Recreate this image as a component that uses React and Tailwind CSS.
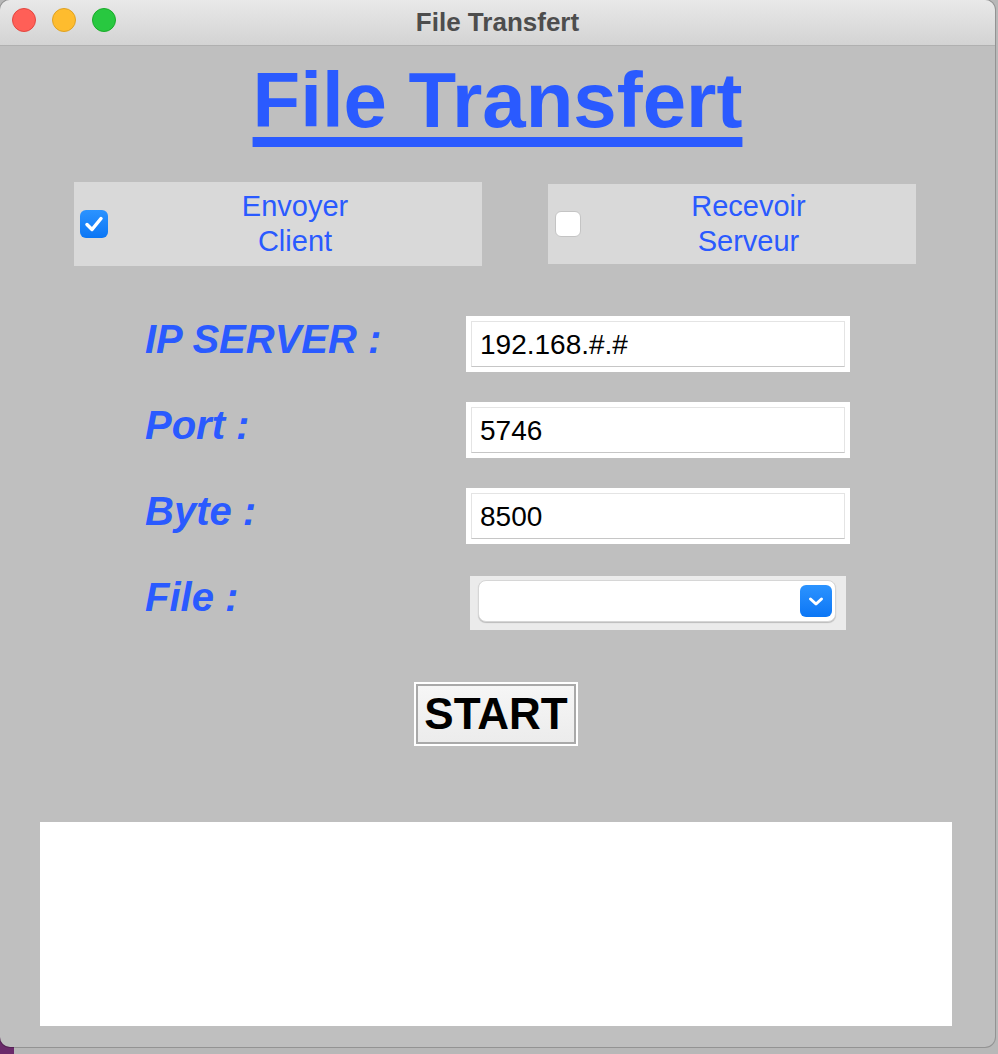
import React from 'react';

const blue = 'text-[#2a5aff]';

const Checkbox = ({ checked }) =>
  checked ? (
    <div className="w-[28px] h-[28px] rounded-[6px] bg-gradient-to-b from-[#2b93ff] to-[#0a76f5] flex items-center justify-center shrink-0">
      <svg width="24" height="24" viewBox="0 0 24 24">
        <path d="M5 12.5 L10 17.5 L19 6.5" fill="none" stroke="#fff" strokeWidth="3.5" strokeLinecap="round" strokeLinejoin="round" />
      </svg>
    </div>
  ) : (
    <div className="w-[26px] h-[26px] rounded-[6px] bg-white border border-[#c4c4c4] shrink-0" />
  );

const ModeBox = ({ checked, lines, className }) => (
  <div className={`bg-[#d9d9d9] flex items-center ${className}`}>
    <Checkbox checked={checked} />
    <div className={`flex-1 text-center text-[29px] leading-[35px] ${blue}`}>
      {lines.map((l) => (
        <div key={l}>{l}</div>
      ))}
    </div>
  </div>
);

const Field = ({ value }) => (
  <div className="bg-white p-[5px] w-[384px] h-[56px]">
    <div className="h-full border border-[#e4e4e4] border-b-[#c6c6c6] flex items-center pl-[8px] pt-[2px] text-[28px] text-black">
      {value}
    </div>
  </div>
);

const Row = ({ label, children }) => (
  <div className="flex items-start h-[56px]">
    <div className={`w-[321px] text-[40px] leading-[46px] font-bold italic ${blue}`}>{label}</div>
    {children}
  </div>
);

const App = () => {
  return (
    <div className="w-[998px] h-[1054px] bg-[#b8b8b8] relative overflow-hidden" style={{ fontFamily: '"Liberation Sans", Arial, sans-serif' }}>
      <div className="absolute left-0 bottom-0 w-[14px] h-[20px] bg-[#6b2a6b]" />
      <div className="relative w-[995px] h-[1047px] rounded-[10px] overflow-hidden flex flex-col bg-[#bfbfbf] shadow-[0_0_0_1px_rgba(0,0,0,0.2)]">
        {/* title bar */}
        <div className="h-[46px] shrink-0 bg-gradient-to-b from-[#e9e9e9] to-[#d3d3d3] border-b border-[#b0b0b0] flex items-center relative">
          <div className="absolute left-[12px] top-[8px] flex gap-[16px]">
            <div className="w-[24px] h-[24px] rounded-full bg-[#ff5f57] border border-[#e2463f]" />
            <div className="w-[24px] h-[24px] rounded-full bg-[#febc2e] border border-[#dea123]" />
            <div className="w-[24px] h-[24px] rounded-full bg-[#28c840] border border-[#1aab29]" />
          </div>
          <div className="flex-1 text-center text-[26px] font-bold text-[#4d4d4d]">File Transfert</div>
        </div>

        {/* heading */}
        <h1 className={`mt-[10px] text-center text-[78px] leading-[88px] font-bold underline decoration-[10px] underline-offset-[10px] ${blue}`}>
          File Transfert
        </h1>

        {/* mode */}
        <div className="mt-[38px] h-[84px] flex items-center pl-[74px] gap-[66px]">
          <ModeBox checked lines={['Envoyer', 'Client']} className="w-[408px] h-[84px] pl-[6px]" />
          <ModeBox lines={['Recevoir', 'Serveur']} className="w-[368px] h-[80px] pl-[7px]" />
        </div>

        {/* form */}
        <div className="mt-[50px] pl-[145px] flex flex-col gap-[30px]">
          <Row label="IP SERVER :">
            <Field value="192.168.#.#" />
          </Row>
          <Row label="Port :">
            <Field value="5746" />
          </Row>
          <Row label="Byte :">
            <Field value="8500" />
          </Row>
          <Row label="File :">
            <div className="mt-[2px] ml-[4px] w-[376px] h-[54px] bg-[#ebebeb] pl-[8px] pr-[10px] pt-[4px]">
              <div className="h-[42px] bg-white rounded-[8px] border border-[#d6d6d6] shadow-[0_1px_1px_rgba(0,0,0,0.2)] flex items-center justify-end pr-[3px]">
                <div className="w-[32px] h-[32px] rounded-[6px] bg-gradient-to-b from-[#2b93ff] to-[#0a76f5] flex items-center justify-center">
                  <svg width="32" height="32" viewBox="0 0 32 32">
                    <path d="M10.5 14 L16 19 L21.5 14" fill="none" stroke="#fff" strokeWidth="3" strokeLinecap="round" strokeLinejoin="round" />
                  </svg>
                </div>
              </div>
            </div>
          </Row>
        </div>

        {/* start */}
        <div className="mt-[52px] flex justify-center pr-[3px]">
          <button className="w-[164px] h-[64px] border-2 border-white">
            <div className="h-full border-2 border-[#a9a9a9] bg-gradient-to-b from-[#f6f6f6] to-[#ececec] flex items-center justify-center text-[44px] font-bold text-black leading-none">
              START
            </div>
          </button>
        </div>

        {/* log */}
        <div className="mt-[76px] mx-[40px] w-[912px] h-[204px] bg-white" />
      </div>
    </div>
  );
};

export default App;
